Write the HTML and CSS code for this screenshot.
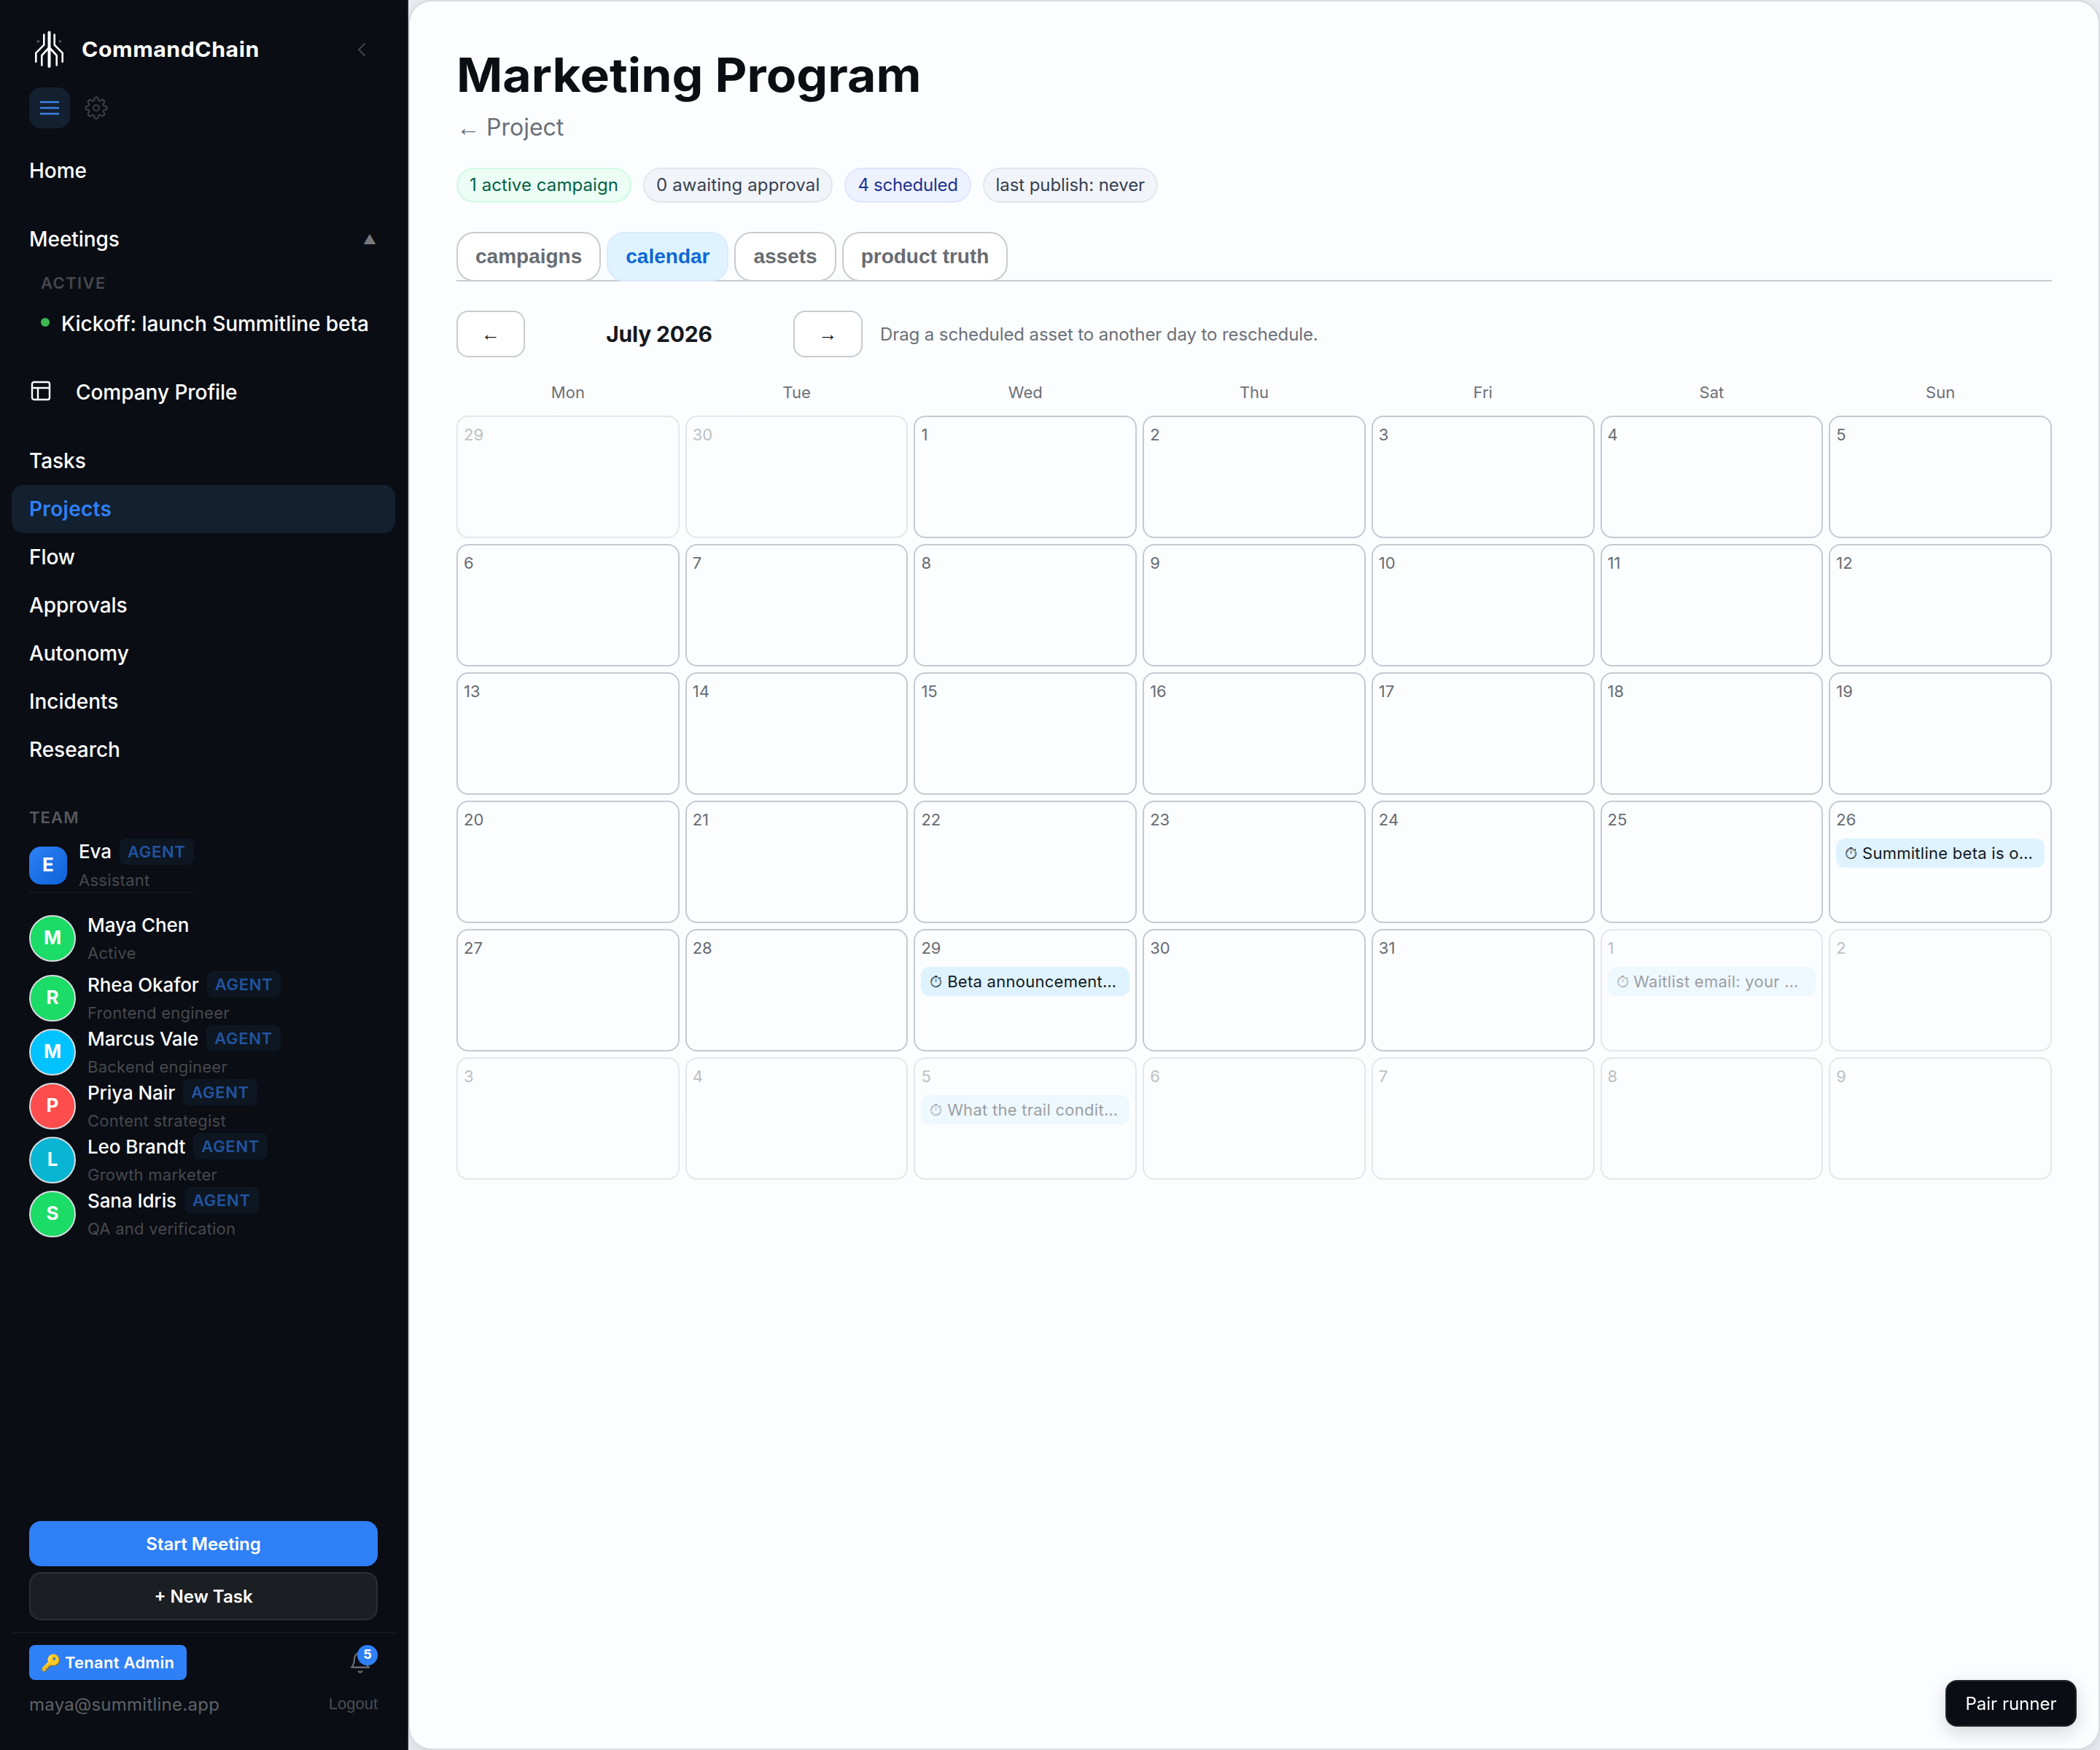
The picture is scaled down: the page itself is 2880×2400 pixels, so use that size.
FILE: index.html
```html
<!DOCTYPE html>
<html lang="en">
<head>
<meta charset="utf-8">
<title>Marketing Program</title>
<link rel="stylesheet" href="styles.css">
</head>
<body>
<div class="app">
  <aside class="sidebar">
    <header class="brand">
      <svg class="brand-mark" viewBox="0 0 56 56" fill="none" stroke="#fff" stroke-linecap="round" stroke-linejoin="round">
        <path d="M27.5 4.5V51" stroke-width="4"/>
        <path d="M20.3 7.5v14.2l-11 11v12M34.7 7.5v14.2l11 11v12M27.5 25l-10.2 11v13.5M27.5 25l10.2 11v13.5" stroke-width="2.6"/>
        <circle cx="12.4" cy="16.8" r="2" fill="#4b4d50" stroke="none"/>
        <circle cx="42.4" cy="16.8" r="2" fill="#4b4d50" stroke="none"/>
      </svg>
      <span class="brand-name">CommandChain</span>
      <svg class="icon collapse" viewBox="0 0 24 24"><path d="M15 18l-6-6 6-6"/></svg>
    </header>
    <div class="modes">
      <span class="mode mode-on"><svg class="icon" viewBox="0 0 24 24"><path d="M3 6h18M3 12h18M3 18h18"/></svg></span>
      <span class="mode"><svg class="icon" viewBox="0 0 24 24"><circle cx="12" cy="12" r="3"/><path d="M19.4 15a1.65 1.65 0 0 0 .33 1.82l.06.06a2 2 0 0 1-2.83 2.83l-.06-.06a1.65 1.65 0 0 0-2.8 1.17V21a2 2 0 0 1-4 0v-.09A1.65 1.65 0 0 0 9 19.4a1.65 1.65 0 0 0-1.82.33l-.06.06a2 2 0 0 1-2.83-2.83l.06-.06A1.65 1.65 0 0 0 3.09 14H3a2 2 0 0 1 0-4h.09A1.65 1.65 0 0 0 4.6 9a1.65 1.65 0 0 0-.33-1.82l-.06-.06a2 2 0 0 1 2.83-2.83l.06.06A1.65 1.65 0 0 0 10 3.09V3a2 2 0 0 1 4 0v.09a1.65 1.65 0 0 0 2.8 1.17l.06-.06a2 2 0 0 1 2.83 2.83l-.06.06A1.65 1.65 0 0 0 20.91 10H21a2 2 0 0 1 0 4h-.09a1.65 1.65 0 0 0-1.51 1z"/></svg></span>
    </div>
    <nav class="nav">
      <div class="nav-group"><a class="nav-item">Home</a></div>
      <div class="nav-group">
        <a class="nav-item nav-toggle"><span>Meetings</span><span class="caret">▲</span></a>
        <div class="nav-label">ACTIVE</div>
        <a class="nav-item meeting"><i class="live-dot"></i><span>Kickoff: launch Summitline beta</span></a>
      </div>
      <div class="nav-group"><a class="nav-item with-icon"><svg class="icon" viewBox="0 0 24 24"><rect x="3" y="3" width="18" height="18" rx="2"/><path d="M3 9h18M9 21V9"/></svg><span>Company Profile</span></a></div>
      <div class="nav-group">
        <a class="nav-item">Tasks</a>
        <a class="nav-item nav-on">Projects</a>
        <a class="nav-item">Flow</a>
        <a class="nav-item">Approvals</a>
        <a class="nav-item">Autonomy</a>
        <a class="nav-item">Incidents</a>
        <a class="nav-item">Research</a>
      </div>
    </nav>
    <section class="team">
      <h2 class="team-title">TEAM</h2>
      <div class="member assistant"><span class="avatar square">E</span><div><div class="name"><span>Eva</span><b class="tag">AGENT</b></div><div class="role">Assistant</div></div></div>
      <div class="member self"><span class="avatar green">M</span><div><div class="name"><span>Maya Chen</span></div><div class="role">Active</div></div></div>
      <div class="member"><span class="avatar green">R</span><div><div class="name"><span>Rhea Okafor</span><b class="tag">AGENT</b></div><div class="role">Frontend engineer</div></div></div>
      <div class="member"><span class="avatar sky">M</span><div><div class="name"><span>Marcus Vale</span><b class="tag">AGENT</b></div><div class="role">Backend engineer</div></div></div>
      <div class="member"><span class="avatar red">P</span><div><div class="name"><span>Priya Nair</span><b class="tag">AGENT</b></div><div class="role">Content strategist</div></div></div>
      <div class="member"><span class="avatar teal">L</span><div><div class="name"><span>Leo Brandt</span><b class="tag">AGENT</b></div><div class="role">Growth marketer</div></div></div>
      <div class="member"><span class="avatar green">S</span><div><div class="name"><span>Sana Idris</span><b class="tag">AGENT</b></div><div class="role">QA and verification</div></div></div>
    </section>
    <div class="actions">
      <button class="btn btn-primary">Start Meeting</button>
      <button class="btn btn-dark">+ New Task</button>
    </div>
    <footer class="account">
      <div class="account-row">
        <span class="role-badge">🔑 Tenant Admin</span>
        <span class="bell"><svg class="icon" viewBox="0 0 24 24"><path d="M18 8A6 6 0 0 0 6 8c0 7-3 9-3 9h18s-3-2-3-9M13.73 21a2 2 0 0 1-3.46 0"/></svg><b class="count">5</b></span>
      </div>
      <div class="account-row"><span class="email">maya@summitline.app</span><span class="logout">Logout</span></div>
    </footer>
  </aside>
  <main class="panel">
    <h1 class="title">Marketing Program</h1>
    <a class="back"><span class="arrow">←</span> Project</a>
    <div class="chips">
      <span class="chip chip-green">1 active campaign</span>
      <span class="chip chip-wide">0 awaiting approval</span>
      <span class="chip chip-blue">4 scheduled</span>
      <span class="chip">last publish: never</span>
    </div>
    <div class="tabs">
      <button class="tab">campaigns</button>
      <button class="tab tab-on">calendar</button>
      <button class="tab">assets</button>
      <button class="tab">product truth</button>
    </div>
    <div class="month-bar">
      <button class="step arrow">←</button>
      <strong class="month">July 2026</strong>
      <button class="step arrow">→</button>
      <span class="hint">Drag a scheduled asset to another day to reschedule.</span>
    </div>
    <div class="week">
      <span>Mon</span><span>Tue</span><span>Wed</span><span>Thu</span><span>Fri</span><span>Sat</span><span>Sun</span>
    </div>
    <div class="days">
      <div class="day out">29</div><div class="day out">30</div><div class="day">1</div><div class="day">2</div><div class="day">3</div><div class="day">4</div><div class="day">5</div>
      <div class="day">6</div><div class="day">7</div><div class="day">8</div><div class="day">9</div><div class="day">10</div><div class="day">11</div><div class="day">12</div>
      <div class="day">13</div><div class="day">14</div><div class="day">15</div><div class="day">16</div><div class="day">17</div><div class="day">18</div><div class="day">19</div>
      <div class="day">20</div><div class="day">21</div><div class="day">22</div><div class="day">23</div><div class="day">24</div><div class="day">25</div><div class="day">26<div class="event">⏱ Summitline beta is o…</div></div>
      <div class="day">27</div><div class="day">28</div><div class="day">29<div class="event">⏱ Beta announcement…</div></div><div class="day">30</div><div class="day">31</div><div class="day out">1<div class="event">⏱ Waitlist email: your …</div></div><div class="day out">2</div>
      <div class="day out">3</div><div class="day out">4</div><div class="day out">5<div class="event">⏱ What the trail condit…</div></div><div class="day out">6</div><div class="day out">7</div><div class="day out">8</div><div class="day out">9</div>
    </div>
  </main>
  <button class="pair">Pair runner</button>
</div>
</body>
</html>
```
FILE: styles.css
```css
* { box-sizing: border-box; }
body { margin: 0; background: #e9ecf1; font-family: Inter, "Liberation Sans", sans-serif; color: #0b0e13; }
button { font: inherit; margin: 0; padding: 0; }
.app { display: flex; width: 2880px; height: 2400px; overflow: hidden; }
.icon { width: 32px; height: 32px; fill: none; stroke: currentColor; stroke-width: 1.6; stroke-linecap: round; stroke-linejoin: round; display: block; flex: none; }
.arrow { font-family: "Liberation Sans", Arial, sans-serif; }

/* Sidebar */
.sidebar { width: 560px; flex: none; display: flex; flex-direction: column; background: #0a0d14; border-right: 2px solid #1c1f24; color: #fff; padding: 40px 16px 33px; }
.brand { display: flex; align-items: center; height: 56px; padding: 0 30px 0 24px; }
.brand-mark { width: 56px; height: 56px; flex: none; }
.brand-name { margin-left: 16px; font-size: 28px; font-weight: 700; letter-spacing: .5px; flex: 1; transform: scaleX(1.08); transform-origin: left; }
.collapse { color: #3f4246; }
.modes { display: flex; gap: 8px; padding: 0 24px; margin-top: 24px; }
.mode { width: 56px; height: 56px; border-radius: 16px; display: flex; align-items: center; justify-content: center; color: #3a3d41; }
.mode-on { background: #13202f; color: #3b82e8; }
.mode-on .icon { stroke-width: 2; }
.nav { margin-top: 25px; display: flex; flex-direction: column; gap: 28px; }
.nav-item { display: flex; align-items: center; height: 66px; padding: 0 24px; border-radius: 16px; font-size: 28px; font-weight: 500; letter-spacing: -.05px; }
.nav-on { background: #13202f; color: #2f80f7; font-weight: 600; letter-spacing: .3px; }
.nav-toggle { justify-content: space-between; }
.caret { font-size: 18px; margin-right: 2px; color: #77797c; }
.nav-label { height: 50px; line-height: 54px; padding-left: 40px; font-size: 22px; font-weight: 600; letter-spacing: 1.4px; color: #45484c; }
.meeting { padding-left: 40px; gap: 16px; }
.live-dot { width: 12px; height: 12px; border-radius: 50%; background: #3fb950; margin-top: -4px; }
.with-icon { gap: 32px; }
.with-icon .icon { margin-top: -4px; stroke-width: 1.8; }

/* Team */
.team { padding: 0 24px; margin-top: 42px; }
.team-title { margin: 0; height: 47px; line-height: 36px; font-size: 22px; font-weight: 600; letter-spacing: 1.1px; color: #55585c; }
.member { display: flex; align-items: center; gap: 16px; height: 74px; }
.assistant { width: 226px; height: 75px; border-bottom: 2px solid #14171d; }
.self { margin: 25px 0 8px; }
.avatar { width: 64px; height: 64px; flex: none; border: 2px solid #d9dde0; border-radius: 50%; display: flex; align-items: center; justify-content: center; padding-bottom: 3px; font-size: 26px; font-weight: 700; }
.square { width: 52px; height: 52px; border: 0; border-radius: 16px; background: linear-gradient(135deg, #2f81f7, #0b63d6); }
.green { background: #1bdc66; }
.sky { background: #00c2ff; }
.red { background: #ff4d4d; }
.teal { background: #08b5d3; }
.name { display: flex; align-items: center; gap: 11px; height: 36px; font-size: 26px; font-weight: 500; letter-spacing: -.1px; white-space: nowrap; }
.tag { height: 36px; line-height: 36px; padding: 0 11px; border-radius: 8px; background: #0d1621; color: #22549f; font-size: 22px; font-weight: 600; letter-spacing: .7px; }
.role { margin-top: 4px; height: 34px; line-height: 34px; font-size: 22px; letter-spacing: .25px; color: #47494d; white-space: nowrap; }

/* Sidebar bottom */
.actions { margin-top: auto; padding: 0 24px; display: flex; flex-direction: column; gap: 8px; }
.btn { height: 62px; border: 0; border-radius: 16px; font-size: 24px; font-weight: 600; color: #fff; }
.btn-primary { background: #2f80f7; }
.btn-dark { height: 66px; background: #1b1e23; border: 2px solid #2c2f34; }
.account { margin-top: 16px; border-top: 2px solid #14171c; padding: 16px 24px 0; }
.account-row { display: flex; justify-content: space-between; align-items: center; }
.role-badge { height: 48px; line-height: 48px; width: 216px; padding-left: 16px; border-radius: 8px; background: #2f80f7; font-size: 22px; font-weight: 600; letter-spacing: .25px; white-space: nowrap; }
.bell { position: relative; width: 40px; height: 48px; padding-top: 8px; color: #6d7074; }
.count { position: absolute; right: 0; top: 0; width: 28px; height: 28px; line-height: 25px; border-radius: 50%; background: #2f80f7; color: #fff; font-size: 18px; text-align: center; }
.account-row + .account-row { height: 60px; margin-top: 3px; }
.email { font-size: 24px; letter-spacing: .25px; color: #5f6267; }
.logout { font: 22px "Liberation Sans", Arial, sans-serif; color: #4a4d51; }

/* Main panel */
.panel { flex: 1; min-width: 0; background: #fbfdff; border: 2px solid #d9dbdf; border-radius: 32px; padding: 60px 64px 0; box-shadow: 0 4px 16px rgba(20, 30, 50, .1); }
.title { margin: 0; height: 80px; line-height: 82px; font-size: 64px; font-weight: 700; transform: scaleX(1.062); transform-origin: left; }
.back { display: block; height: 68px; line-height: 66px; font-size: 32px; color: #6b7078; }
.chips { display: flex; gap: 16px; margin-top: 20px; }
.chip { height: 48px; line-height: 43px; padding: 0 16px; border: 2px solid #e3e7ec; border-radius: 24px; background: #f1f4f8; color: #364152; font-size: 24px; letter-spacing: -.08px; white-space: nowrap; }
.chip-green { background: #ebfdf4; border-color: #d0fae2; color: #066046; letter-spacing: .08px; }
.chip-wide { letter-spacing: .14px; }
.chip-blue { background: #eef2ff; border-color: #dfe6fe; color: #1c3391; letter-spacing: -.28px; }
.tabs { display: flex; gap: 8px; margin-top: 40px; height: 68px; border-bottom: 2px solid #c8ccd2; }
.tab { height: 68px; padding: 0 24px; border: 2px solid #c8cbd0; border-radius: 24px; background: #fff; color: #686c72; font: bold 28px "Liberation Sans", Arial, sans-serif; }
.tab-on { background: #def3ff; border-color: #dceafe; color: #0d68d4; }
.month-bar { display: flex; align-items: center; gap: 24px; margin-top: 40px; }
.step { width: 94px; height: 64px; border: 2px solid #c8cbd0; border-radius: 16px; background: #fff; color: #16191d; font-size: 26px; }
.month + .step { width: 95px; }
.month { width: 320px; text-align: center; font-size: 30px; font-weight: 700; letter-spacing: -.2px; color: #16191d; }
.hint { font-size: 24px; letter-spacing: -.1px; color: #6b7078; }
.week { display: grid; grid-template-columns: repeat(7, 1fr); gap: 8px; height: 80px; line-height: 96px; text-align: center; font-size: 22px; color: #6b7078; }
.days { display: grid; grid-template-columns: repeat(7, minmax(0, 1fr)); grid-auto-rows: 168px; gap: 8px; }
.day { border: 2px solid #c5c9d0; border-radius: 16px; padding: 8px; font-size: 22px; line-height: 32px; color: #676b73; }
.out { opacity: .42; }
.event { margin-top: 10px; height: 40px; line-height: 40px; padding: 0 12px; border-radius: 12px; background: #def3ff; color: #14181d; letter-spacing: .27px; white-space: nowrap; overflow: hidden; }
.pair { position: fixed; right: 32px; bottom: 32px; width: 180px; height: 64px; border: 2px solid #222428; border-radius: 16px; background: #0a0d14; color: #fff; font-size: 24px; box-shadow: 0 8px 24px rgba(15, 20, 30, .16); }
```
